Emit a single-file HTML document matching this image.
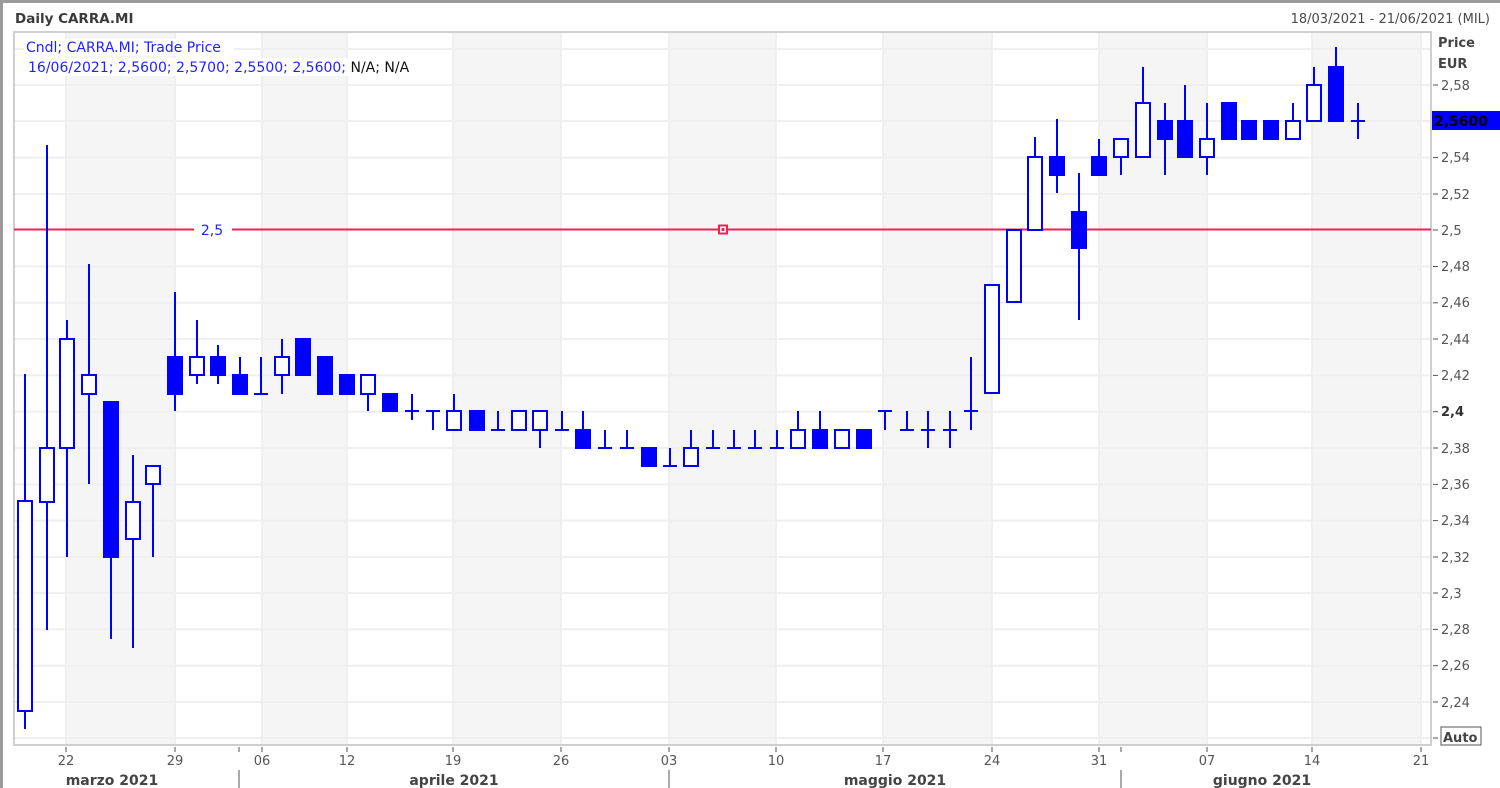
<!DOCTYPE html>
<html><head><meta charset="utf-8"><style>
html,body{margin:0;padding:0;background:#fff;width:1500px;height:788px;overflow:hidden;font-family:"Liberation Sans",sans-serif}
svg text{font-family:"DejaVu Sans","Liberation Sans",sans-serif}
</style></head><body>
<svg width="1500" height="788" xmlns="http://www.w3.org/2000/svg">
<rect x="0" y="0" width="1500" height="788" fill="#fff"/>
<rect x="0" y="0" width="1500" height="3" fill="#9a9a9a"/>
<rect x="0" y="0" width="3" height="788" fill="#9a9a9a"/>
<text x="15" y="23" font-size="13.5" font-weight="bold" fill="#3a3a3a">Daily CARRA.MI</text>
<text x="1490" y="23" font-size="13" fill="#4a4a4a" text-anchor="end">18/03/2021 - 21/06/2021 (MIL)</text>
<g fill="#f5f5f5">
<rect x="66" y="33" width="109" height="712"/><rect x="262" y="33" width="85" height="712"/>
<rect x="453" y="33" width="108" height="712"/><rect x="669" y="33" width="107" height="712"/>
<rect x="883" y="33" width="109" height="712"/><rect x="1099" y="33" width="108" height="712"/>
<rect x="1312" y="33" width="109" height="712"/>
</g>
<g stroke="#efefef" stroke-width="2">
<line x1="14" x2="1431" y1="49" y2="49"/><line x1="14" x2="1431" y1="85" y2="85"/><line x1="14" x2="1431" y1="121" y2="121"/>
<line x1="14" x2="1431" y1="157.6" y2="157.6"/><line x1="14" x2="1431" y1="194" y2="194"/>
<line x1="14" x2="1431" y1="266.5" y2="266.5"/><line x1="14" x2="1431" y1="302.8" y2="302.8"/><line x1="14" x2="1431" y1="339" y2="339"/>
<line x1="14" x2="1431" y1="375.4" y2="375.4"/><line x1="14" x2="1431" y1="411.7" y2="411.7"/><line x1="14" x2="1431" y1="448" y2="448"/>
<line x1="14" x2="1431" y1="484.4" y2="484.4"/><line x1="14" x2="1431" y1="520.6" y2="520.6"/><line x1="14" x2="1431" y1="557" y2="557"/>
<line x1="14" x2="1431" y1="593" y2="593"/><line x1="14" x2="1431" y1="629.4" y2="629.4"/><line x1="14" x2="1431" y1="665.7" y2="665.7"/>
<line x1="14" x2="1431" y1="702" y2="702"/><line x1="14" x2="1431" y1="738" y2="738"/>
<line x1="66" x2="66" y1="33" y2="745"/><line x1="175" x2="175" y1="33" y2="745"/><line x1="262" x2="262" y1="33" y2="745"/>
<line x1="347" x2="347" y1="33" y2="745"/><line x1="453" x2="453" y1="33" y2="745"/><line x1="561" x2="561" y1="33" y2="745"/>
<line x1="669" x2="669" y1="33" y2="745"/><line x1="776" x2="776" y1="33" y2="745"/><line x1="883" x2="883" y1="33" y2="745"/>
<line x1="992" x2="992" y1="33" y2="745"/><line x1="1099" x2="1099" y1="33" y2="745"/><line x1="1207" x2="1207" y1="33" y2="745"/>
<line x1="1312" x2="1312" y1="33" y2="745"/><line x1="1421" x2="1421" y1="33" y2="745"/>
</g>
<rect x="14" y="32" width="1417" height="713" fill="none" stroke="#cfcfcf" stroke-width="2"/>
<rect x="24" y="39" width="210" height="17" fill="#fff"/>
<rect x="26" y="58" width="392" height="18" fill="#fff"/>
<text x="26" y="52" font-size="14" fill="#2222ff">Cndl; CARRA.MI; Trade Price</text>
<text x="28" y="72" font-size="14" fill="#2222ff">16/06/2021; 2,5600; 2,5700; 2,5500; 2,5600; <tspan fill="#111">N/A; N/A</tspan></text>
<line x1="14" x2="194" y1="229.5" y2="229.5" stroke="#ee2255" stroke-width="2"/>
<line x1="232" x2="1431" y1="229.5" y2="229.5" stroke="#ee2255" stroke-width="2"/>
<text x="212" y="235" font-size="14" fill="#2222ff" text-anchor="middle">2,5</text>
<rect x="719" y="225.5" width="8" height="8" fill="#fff" stroke="#ee2255" stroke-width="2"/>
<rect x="721.5" y="228" width="3" height="3" fill="#ee2255"/>
<g stroke="#0000ff" stroke-width="2" fill="#fff">
<line x1="25" x2="25" y1="374" y2="729"/><rect x="18" y="501" width="14" height="210"/>
<line x1="47" x2="47" y1="145" y2="630"/><rect x="40" y="448" width="14" height="54"/>
<line x1="67" x2="67" y1="320" y2="557"/><rect x="60" y="339" width="14" height="109"/>
<line x1="89" x2="89" y1="264" y2="484"/><rect x="82" y="375" width="14" height="19"/>
<line x1="111" x2="111" y1="402" y2="639"/><rect x="104" y="402" width="14" height="155" fill="#0000ff"/>
<line x1="133" x2="133" y1="455" y2="648"/><rect x="126" y="502" width="14" height="37"/>
<line x1="153" x2="153" y1="466" y2="557"/><rect x="146" y="466" width="14" height="18"/>
<line x1="175" x2="175" y1="292" y2="411"/><rect x="168" y="357" width="14" height="37" fill="#0000ff"/>
<line x1="197" x2="197" y1="320" y2="384"/><rect x="190" y="357" width="14" height="18"/>
<line x1="218" x2="218" y1="345" y2="384"/><rect x="211" y="357" width="14" height="18" fill="#0000ff"/>
<line x1="240" x2="240" y1="357" y2="394"/><rect x="233" y="375" width="14" height="19" fill="#0000ff"/>
<line x1="261" x2="261" y1="357" y2="394"/><line x1="254" x2="268" y1="394" y2="394"/>
<line x1="282" x2="282" y1="339" y2="394"/><rect x="275" y="357" width="14" height="18"/>
<rect x="296" y="339" width="14" height="36" fill="#0000ff"/>
<rect x="318" y="357" width="14" height="37" fill="#0000ff"/>
<rect x="340" y="375" width="14" height="19" fill="#0000ff"/>
<line x1="368" x2="368" y1="375" y2="411"/><rect x="361" y="375" width="14" height="19"/>
<rect x="383" y="394" width="14" height="17" fill="#0000ff"/>
<line x1="412" x2="412" y1="394" y2="420"/><line x1="405" x2="419" y1="411" y2="411"/>
<line x1="433" x2="433" y1="411" y2="430"/><line x1="426" x2="440" y1="411" y2="411"/>
<line x1="454" x2="454" y1="394" y2="411"/><rect x="447" y="411" width="14" height="19"/>
<rect x="470" y="411" width="14" height="19" fill="#0000ff"/>
<line x1="498" x2="498" y1="411" y2="430"/><line x1="491" x2="505" y1="430" y2="430"/>
<rect x="512" y="411" width="14" height="19"/>
<line x1="540" x2="540" y1="430" y2="448"/><rect x="533" y="411" width="14" height="19"/>
<line x1="562" x2="562" y1="411" y2="430"/><line x1="555" x2="569" y1="430" y2="430"/>
<line x1="583" x2="583" y1="411" y2="430"/><rect x="576" y="430" width="14" height="18" fill="#0000ff"/>
<line x1="605" x2="605" y1="430" y2="448"/><line x1="598" x2="612" y1="448" y2="448"/>
<line x1="627" x2="627" y1="430" y2="448"/><line x1="620" x2="634" y1="448" y2="448"/>
<rect x="642" y="448" width="14" height="18" fill="#0000ff"/>
<line x1="670" x2="670" y1="448" y2="466"/><line x1="663" x2="677" y1="466" y2="466"/>
<line x1="691" x2="691" y1="430" y2="448"/><rect x="684" y="448" width="14" height="18"/>
<line x1="713" x2="713" y1="430" y2="448"/><line x1="706" x2="720" y1="448" y2="448"/>
<line x1="734" x2="734" y1="430" y2="448"/><line x1="727" x2="741" y1="448" y2="448"/>
<line x1="755" x2="755" y1="430" y2="448"/><line x1="748" x2="762" y1="448" y2="448"/>
<line x1="777" x2="777" y1="430" y2="448"/><line x1="770" x2="784" y1="448" y2="448"/>
<line x1="798" x2="798" y1="411" y2="430"/><rect x="791" y="430" width="14" height="18"/>
<line x1="820" x2="820" y1="411" y2="430"/><rect x="813" y="430" width="14" height="18" fill="#0000ff"/>
<rect x="835" y="430" width="14" height="18"/>
<rect x="857" y="430" width="14" height="18" fill="#0000ff"/>
<line x1="885" x2="885" y1="411" y2="430"/><line x1="878" x2="892" y1="411" y2="411"/>
<line x1="907" x2="907" y1="411" y2="430"/><line x1="900" x2="914" y1="430" y2="430"/>
<line x1="928" x2="928" y1="411" y2="448"/><line x1="921" x2="935" y1="430" y2="430"/>
<line x1="950" x2="950" y1="411" y2="448"/><line x1="943" x2="957" y1="430" y2="430"/>
<line x1="971" x2="971" y1="357" y2="430"/><line x1="964" x2="978" y1="411" y2="411"/>
<rect x="985" y="285" width="14" height="108"/>
<rect x="1007" y="230" width="14" height="72"/>
<line x1="1035" x2="1035" y1="137" y2="157"/><rect x="1028" y="157" width="14" height="73"/>
<line x1="1057" x2="1057" y1="119" y2="193"/><rect x="1050" y="157" width="14" height="18" fill="#0000ff"/>
<line x1="1079" x2="1079" y1="173" y2="320"/><rect x="1072" y="212" width="14" height="36" fill="#0000ff"/>
<line x1="1099" x2="1099" y1="139" y2="157"/><rect x="1092" y="157" width="14" height="18" fill="#0000ff"/>
<line x1="1121" x2="1121" y1="157" y2="175"/><rect x="1114" y="139" width="14" height="18"/>
<line x1="1143" x2="1143" y1="67" y2="103"/><rect x="1136" y="103" width="14" height="54"/>
<line x1="1165" x2="1165" y1="103" y2="175"/><rect x="1158" y="121" width="14" height="18" fill="#0000ff"/>
<line x1="1185" x2="1185" y1="85" y2="121"/><rect x="1178" y="121" width="14" height="36" fill="#0000ff"/>
<line x1="1207" x2="1207" y1="103" y2="175"/><rect x="1200" y="139" width="14" height="18"/>
<rect x="1222" y="103" width="14" height="36" fill="#0000ff"/>
<rect x="1242" y="121" width="14" height="18" fill="#0000ff"/>
<rect x="1264" y="121" width="14" height="18" fill="#0000ff"/>
<line x1="1293" x2="1293" y1="103" y2="121"/><rect x="1286" y="121" width="14" height="18"/>
<line x1="1314" x2="1314" y1="67" y2="85"/><rect x="1307" y="85" width="14" height="36"/>
<line x1="1336" x2="1336" y1="47" y2="67"/><rect x="1329" y="67" width="14" height="54" fill="#0000ff"/>
<line x1="1358" x2="1358" y1="103" y2="139"/><line x1="1351" x2="1365" y1="121" y2="121"/>
</g>
<text x="1438" y="47" font-size="13" font-weight="bold" fill="#444">Price</text>
<text x="1438" y="68" font-size="13" font-weight="bold" fill="#444">EUR</text>
<g stroke="#555" stroke-width="1">
<line x1="1433" x2="1438" y1="85" y2="85"/><line x1="1433" x2="1438" y1="157.6" y2="157.6"/><line x1="1433" x2="1438" y1="194" y2="194"/>
<line x1="1433" x2="1438" y1="230" y2="230"/><line x1="1433" x2="1438" y1="266.5" y2="266.5"/><line x1="1433" x2="1438" y1="302.8" y2="302.8"/>
<line x1="1433" x2="1438" y1="339" y2="339"/><line x1="1433" x2="1438" y1="375.4" y2="375.4"/><line x1="1433" x2="1438" y1="411.7" y2="411.7"/>
<line x1="1433" x2="1438" y1="448" y2="448"/><line x1="1433" x2="1438" y1="484.4" y2="484.4"/><line x1="1433" x2="1438" y1="520.6" y2="520.6"/>
<line x1="1433" x2="1438" y1="557" y2="557"/><line x1="1433" x2="1438" y1="593" y2="593"/><line x1="1433" x2="1438" y1="629.4" y2="629.4"/>
<line x1="1433" x2="1438" y1="665.7" y2="665.7"/><line x1="1433" x2="1438" y1="702" y2="702"/><line x1="1433" x2="1438" y1="738" y2="738"/>
</g>
<g font-size="13" fill="#555">
<text x="1441" y="90">2,58</text><text x="1441" y="162">2,54</text><text x="1441" y="199">2,52</text>
<text x="1441" y="235">2,5</text><text x="1441" y="271">2,48</text><text x="1441" y="307">2,46</text>
<text x="1441" y="344">2,44</text><text x="1441" y="380">2,42</text><text x="1441" y="416" font-weight="bold" fill="#333">2,4</text>
<text x="1441" y="453">2,38</text><text x="1441" y="489">2,36</text><text x="1441" y="525">2,34</text>
<text x="1441" y="562">2,32</text><text x="1441" y="598">2,3</text><text x="1441" y="634">2,28</text>
<text x="1441" y="670">2,26</text><text x="1441" y="707">2,24</text>
</g>
<rect x="1432" y="111" width="68" height="19" fill="#0000ff"/>
<text x="1434" y="126" font-size="14" font-weight="bold" fill="#000">2,5600</text>
<rect x="1441" y="727" width="40" height="18" fill="#fff" stroke="#555" stroke-width="1"/>
<text x="1443" y="742" font-size="13" font-weight="bold" fill="#444">Auto</text>
<g stroke="#555" stroke-width="1">
<line x1="66" x2="66" y1="747" y2="752"/><line x1="175" x2="175" y1="747" y2="752"/><line x1="239" x2="239" y1="747" y2="752"/>
<line x1="262" x2="262" y1="747" y2="752"/><line x1="347" x2="347" y1="747" y2="752"/><line x1="453" x2="453" y1="747" y2="752"/>
<line x1="561" x2="561" y1="747" y2="752"/><line x1="669" x2="669" y1="747" y2="752"/><line x1="776" x2="776" y1="747" y2="752"/>
<line x1="883" x2="883" y1="747" y2="752"/><line x1="992" x2="992" y1="747" y2="752"/><line x1="1099" x2="1099" y1="747" y2="752"/>
<line x1="1121" x2="1121" y1="747" y2="752"/><line x1="1207" x2="1207" y1="747" y2="752"/><line x1="1312" x2="1312" y1="747" y2="752"/>
<line x1="1421" x2="1421" y1="747" y2="752"/>
<line x1="239" x2="239" y1="770" y2="788"/><line x1="669" x2="669" y1="770" y2="788"/><line x1="1121" x2="1121" y1="770" y2="788"/>
</g>
<g font-size="13" fill="#555" text-anchor="middle">
<text x="66" y="765">22</text><text x="175" y="765">29</text><text x="262" y="765">06</text><text x="347" y="765">12</text>
<text x="453" y="765">19</text><text x="561" y="765">26</text><text x="669" y="765">03</text><text x="776" y="765">10</text>
<text x="883" y="765">17</text><text x="992" y="765">24</text><text x="1099" y="765">31</text><text x="1207" y="765">07</text>
<text x="1312" y="765">14</text><text x="1421" y="765">21</text>
</g>
<g font-size="14" font-weight="bold" fill="#444" text-anchor="middle">
<text x="112" y="785">marzo 2021</text><text x="454" y="785">aprile 2021</text>
<text x="895" y="785">maggio 2021</text><text x="1262" y="785">giugno 2021</text>
</g>
</svg>
</body></html>
